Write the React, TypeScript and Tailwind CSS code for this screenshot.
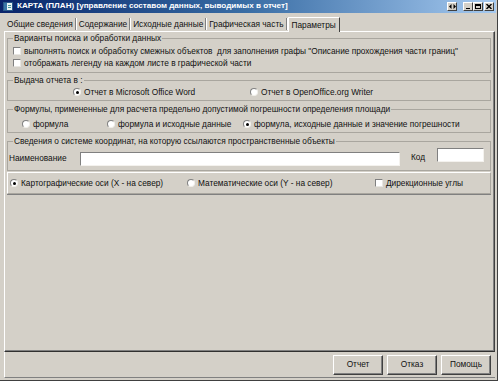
import React from 'react';

function Check({ label, className = '' }: { label: string; className?: string }) {
  return (
    <div className={`flex items-center ${className}`}>
      <span className="w-[8px] h-[8px] bg-white border-t border-l border-t-[#808080] border-l-[#808080] border-b border-r border-b-[#e8e6e2] border-r-[#e8e6e2] shrink-0" />
      <span className="ml-[3px] whitespace-pre">{label}</span>
    </div>
  );
}

function Radio({ label, checked = false, className = '' }: { label: string; checked?: boolean; className?: string }) {
  return (
    <div className={`flex items-center ${className}`}>
      <span className="w-[8px] h-[8px] rounded-full bg-white border border-t-[#808080] border-l-[#808080] border-b-[#f0eee9] border-r-[#f0eee9] flex items-center justify-center shrink-0">
        {checked && <span className="w-[3px] h-[3px] rounded-full bg-black" />}
      </span>
      <span className="ml-[3px] whitespace-pre">{label}</span>
    </div>
  );
}

function Group({ title, className = '', children }: { title: string; className?: string; children: React.ReactNode }) {
  return (
    <fieldset className={`border border-[#a9a69f] ${className}`}>
      <legend className="ml-[5px] px-[1px] leading-[11px]">{title}</legend>
      {children}
    </fieldset>
  );
}

function TitleButton({ children }: { children: React.ReactNode }) {
  return (
    <div className="w-[10px] h-[9px] bg-[#d4d0c8] border-t border-l border-white border-b border-r border-b-[#404040] border-r-[#404040] flex items-center justify-center text-[8px] leading-none font-bold">
      {children}
    </div>
  );
}

function Button({ label }: { label: string }) {
  return (
    <div className="w-[50px] h-[20px] bg-[#d4d0c8] border-t border-l border-white border-b border-r border-b-[#404040] border-r-[#404040] shadow-[inset_-1px_-1px_0_#808080] flex items-center justify-center">
      {label}
    </div>
  );
}

const tabs = ['Общие сведения', 'Содержание', 'Исходные данные', 'Графическая часть'];

export default function App() {
  return (
    <div className="w-[498px] h-[381px] bg-[#d4d0c8] flex flex-col font-['Liberation_Sans',Arial,sans-serif] text-[8.3px] text-[#111] overflow-hidden border-r border-b border-[#404040]">
      {/* title bar */}
      <div className="h-[13px] mr-[1px] bg-gradient-to-r from-[#0a246a] via-[#3a6ea5] to-[#a6caf0] flex items-center pl-[3px] pr-[2px] shrink-0">
        <svg width="10" height="9" viewBox="0 0 10 9" className="shrink-0">
          <rect x="0.5" y="0.5" width="9" height="8" fill="#e8f4f4" stroke="#2a5a8a" />
          <rect x="1" y="1" width="3" height="7" fill="#3a78a8" />
          <rect x="5" y="3" width="3" height="1" fill="#4a9a9a" />
          <rect x="5" y="5" width="3" height="1" fill="#4a9a9a" />
        </svg>
        <span className="ml-[4px] text-white font-bold whitespace-nowrap text-[8.1px]">КАРТА (ПЛАН) [управление составом данных, выводимых в отчет]</span>
        <div className="ml-auto flex items-center">
          <TitleButton>
            <svg width="7" height="5" viewBox="0 0 7 5">
              <path d="M0 2.5 L2.5 0 V5 Z M7 2.5 L4.5 0 V5 Z" fill="#000" />
            </svg>
          </TitleButton>
          <div className="w-[6px]" />
          <TitleButton>
            <span className="w-[4px] h-[1px] bg-black mt-[4px]" />
          </TitleButton>
          <TitleButton>
            <span className="w-[6px] h-[5px] border border-black border-t-2" />
          </TitleButton>
          <div className="w-[1px]" />
          <TitleButton>
            <svg width="6" height="5" viewBox="0 0 6 5">
              <path d="M0.5 0 L5.5 5 M5.5 0 L0.5 5" stroke="#000" strokeWidth="1.4" />
            </svg>
          </TitleButton>
        </div>
      </div>

      <div className="flex-1 flex flex-col pl-[4px] pr-[2px] pt-[4px]">
        {/* tabs */}
        <div className="h-[14px] flex items-stretch pl-[1px] shrink-0">
          {tabs.map((t) => (
            <div key={t} className="flex items-center">
              <span className="px-[2px] leading-[14px]">{t}</span>
              <span className="w-[1px] h-[12px] bg-[#808080] border-r border-white box-content" />
            </div>
          ))}
          <div className="px-[3px] flex items-center bg-[#d4d0c8] border-t border-l border-white border-r border-r-[#404040] -mb-[1px] relative z-10">
            Параметры
          </div>
        </div>

        {/* tab panel */}
        <div className="flex-1 flex flex-col border-t border-l border-white border-r border-b border-r-[#404040] border-b-[#303030] shadow-[inset_-1px_-1px_0_#808080] pl-[2px] pr-[3px]">
          <Group title="Варианты поиска и обработки данных" className="mt-[1px] pb-[3px]">
            <Check className="h-[12px] pl-[5px] mt-[1px]" label={'выполнять поиск и обработку смежных объектов  для заполнения графы "Описание прохождения части границ"'} />
            <Check className="h-[12px] pl-[5px]" label="отображать легенду на каждом листе в графической части" />
          </Group>

          <Group title="Выдача отчета в :" className="mt-[2px] pb-[2px]">
            <div className="h-[12px] flex items-center pl-[65px]">
              <Radio className="w-[177px]" label="Отчет в Microsoft Office Word" checked />
              <Radio label="Отчет в OpenOffice.org Writer" />
            </div>
          </Group>

          <Group title="Формулы, примененные для расчета предельно допустимой погрешности определения площади" className="mt-[3px] pb-[2px]">
            <div className="h-[12px] mt-[3px] flex items-center pl-[14px]">
              <Radio className="w-[85px]" label="формула" />
              <Radio className="w-[136px]" label="формула и исходные данные" />
              <Radio label="формула, исходные данные и значение погрешности" checked />
            </div>
          </Group>

          <Group title="Сведения о системе координат, на которую ссылаются пространственные объекты" className="mt-[3px] pb-[3px]">
            <div className="h-[20px] flex pl-[1px]">
              <span className="self-center mt-[3px] w-[71px]">Наименование</span>
              <div className="mt-[5px] w-[320px] h-[14px] bg-white border-t border-l border-[#808080] border-b border-r border-b-[#f4f2ee] border-r-[#f4f2ee]" />
              <span className="self-center ml-[11px] w-[26px]">Код</span>
              <div className="mt-[1px] w-[47px] h-[14px] bg-white border-t border-l border-[#808080] border-b border-r border-b-[#f4f2ee] border-r-[#f4f2ee]" />
            </div>
          </Group>

          <div className="mt-[1px] h-[22px] border border-t-white border-l-white border-b-[#a9a69f] border-r-[#a9a69f] shadow-[0_1px_0_#808080] flex items-center pl-[2px]">
            <Radio className="w-[177px]" label="Картографические оси (X - на север)" checked />
            <Radio className="w-[188px]" label="Математические оси (Y - на север)" />
            <Check label="Дирекционные углы" />
          </div>
        </div>

        {/* bottom bar */}
        <div className="h-[26px] shrink-0 flex items-center justify-end gap-[4px] pr-[4px] border-l border-white border-b border-b-[#808080] mb-[2px]">
          <Button label="Отчет" />
          <Button label="Отказ" />
          <Button label="Помощь" />
        </div>
      </div>
    </div>
  );
}
